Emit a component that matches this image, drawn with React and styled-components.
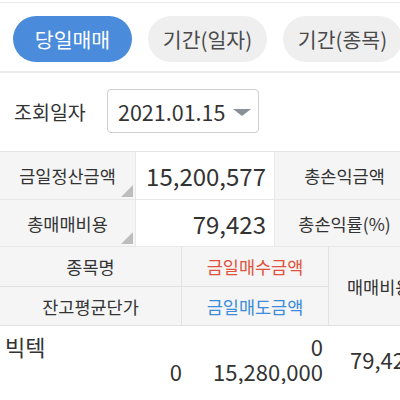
import React from "react";
import styled, { createGlobalStyle } from "styled-components";

const Global = createGlobalStyle`
  html, body { margin: 0; padding: 0; background: #fff; }
  body { width: 400px; height: 400px; overflow: hidden; font-family: "Noto Sans CJK KR", "Noto Sans", sans-serif; color: #333; }
`;

const Page = styled.div`
  width: 400px;
  overflow: hidden;
`;

const TabBar = styled.div`
  display: flex;
  gap: 16px;
  margin-top: 2px;
  padding: 13px 0 9px 13px;
  border-top: 1px solid #ececec;
  border-bottom: 2px solid #ececec;
`;

const Tab = styled.div`
  flex-shrink: 0;
  width: 119px;
  height: 46px;
  border-radius: 23px;
  display: flex;
  align-items: center;
  justify-content: center;
  font-size: 20.5px;
  background: ${(p) => (p.$active ? "#4a8bdb" : "#efefef")};
  color: ${(p) => (p.$active ? "#fff" : "#4a4a4a")};
`;

const SearchRow = styled.div`
  display: flex;
  align-items: center;
  padding: 16px 14px 18px;
  gap: 20px;
`;

const SearchLabel = styled.span`
  width: 73px;
  font-size: 19.5px;
  color: #333;
  white-space: nowrap;
`;

const Select = styled.div`
  width: 152px;
  height: 44px;
  box-sizing: border-box;
  border: 1.5px solid #cfcfcf;
  border-radius: 4px;
  display: flex;
  align-items: center;
  padding-left: 10px;
  gap: 8px;
  font-size: 21.5px;
  color: #333;
`;

const Arrow = styled.span`
  width: 0;
  height: 0;
  border-left: 9px solid transparent;
  border-right: 9px solid transparent;
  border-top: 7px solid #8a8f99;
  margin-top: 2px;
`;

const Summary = styled.div`
  display: grid;
  grid-template-columns: 136px 139px 140px 140px;
  grid-template-rows: 48px 47px;
  border-top: 1px solid #e4e4e4;
`;

const LabelCell = styled.div`
  position: relative;
  background: #f5f5f5;
  display: flex;
  align-items: center;
  justify-content: center;
  font-size: 17.5px;
  color: #333;
  white-space: nowrap;
  border-right: 1px solid #e8e8e8;
  border-bottom: 1px solid #e8e8e8;
  ${(p) => p.$corner && `
    &::after {
      content: "";
      position: absolute;
      right: 2px;
      bottom: 2px;
      width: 0;
      height: 0;
      border-left: 12px solid transparent;
      border-bottom: 12px solid #bdbdbd;
    }
  `}
`;

const ValueCell = styled.div`
  background: #fff;
  display: flex;
  align-items: center;
  justify-content: flex-end;
  padding-right: 8px;
  font-size: 24px;
  color: #333;
  border-right: 1px solid #e8e8e8;
  border-bottom: 1px solid #e8e8e8;
`;

const Header = styled.div`
  display: grid;
  grid-template-columns: 182px 147px 100px;
  grid-template-rows: 40px 38px;
  background: #f5f5f5;
  border-bottom: 1px solid #e2e2e2;
`;

const HeadCell = styled.div`
  display: flex;
  align-items: center;
  justify-content: ${(p) => (p.$start ? "flex-start" : "center")};
  padding-left: ${(p) => (p.$start ? "18px" : "0")};
  font-size: 17.5px;
  color: ${(p) => p.$color || "#333"};
  border-right: 1px solid #e2e2e2;
  border-bottom: ${(p) => (p.$last ? "none" : "1px solid #e2e2e2")};
  white-space: nowrap;
`;

const SpanCell = styled(HeadCell)`
  grid-column: 3;
  grid-row: 1 / span 2;
  border-right: none;
`;

const DataRow = styled.div`
  display: grid;
  grid-template-columns: 182px 147px 100px;
  padding-top: 8px;
`;

const DataCol = styled.div`
  display: flex;
  flex-direction: column;
  align-items: ${(p) => (p.$left ? "flex-start" : "flex-end")};
  justify-content: ${(p) => (p.$left ? "center" : "flex-start")};
  padding-right: ${(p) => p.$pr || "6px"};
  padding-left: ${(p) => (p.$left ? "21px" : "0")};
  font-size: 22px;
  line-height: 25px;
  color: #333;
  white-space: nowrap;
`;

const Name = styled.div`
  align-self: flex-start;
  padding-left: 5px;
  font-size: 22px;
  line-height: 25px;
`;

export default function App() {
  return (
    <Page>
      <Global />
      <TabBar>
        <Tab $active>당일매매</Tab>
        <Tab>기간(일자)</Tab>
        <Tab>기간(종목)</Tab>
      </TabBar>
      <SearchRow>
        <SearchLabel>조회일자</SearchLabel>
        <Select>
          2021.01.15
          <Arrow />
        </Select>
      </SearchRow>
      <Summary>
        <LabelCell $corner>금일정산금액</LabelCell>
        <ValueCell>15,200,577</ValueCell>
        <LabelCell>총손익금액</LabelCell>
        <ValueCell />
        <LabelCell $corner>총매매비용</LabelCell>
        <ValueCell>79,423</ValueCell>
        <LabelCell>총손익률(%)</LabelCell>
        <ValueCell />
      </Summary>
      <Header>
        <HeadCell>종목명</HeadCell>
        <HeadCell $color="#e0523c">금일매수금액</HeadCell>
        <SpanCell $start $last>매매비용</SpanCell>
        <HeadCell $last>잔고평균단가</HeadCell>
        <HeadCell $last $color="#3d8bd9">금일매도금액</HeadCell>
      </Header>
      <DataRow>
        <DataCol $pr="0px">
          <Name>빅텍</Name>
          <span>0</span>
        </DataCol>
        <DataCol>
          <span>0</span>
          <span>15,280,000</span>
        </DataCol>
        <DataCol $left>
          <span>79,423</span>
        </DataCol>
      </DataRow>
    </Page>
  );
}
